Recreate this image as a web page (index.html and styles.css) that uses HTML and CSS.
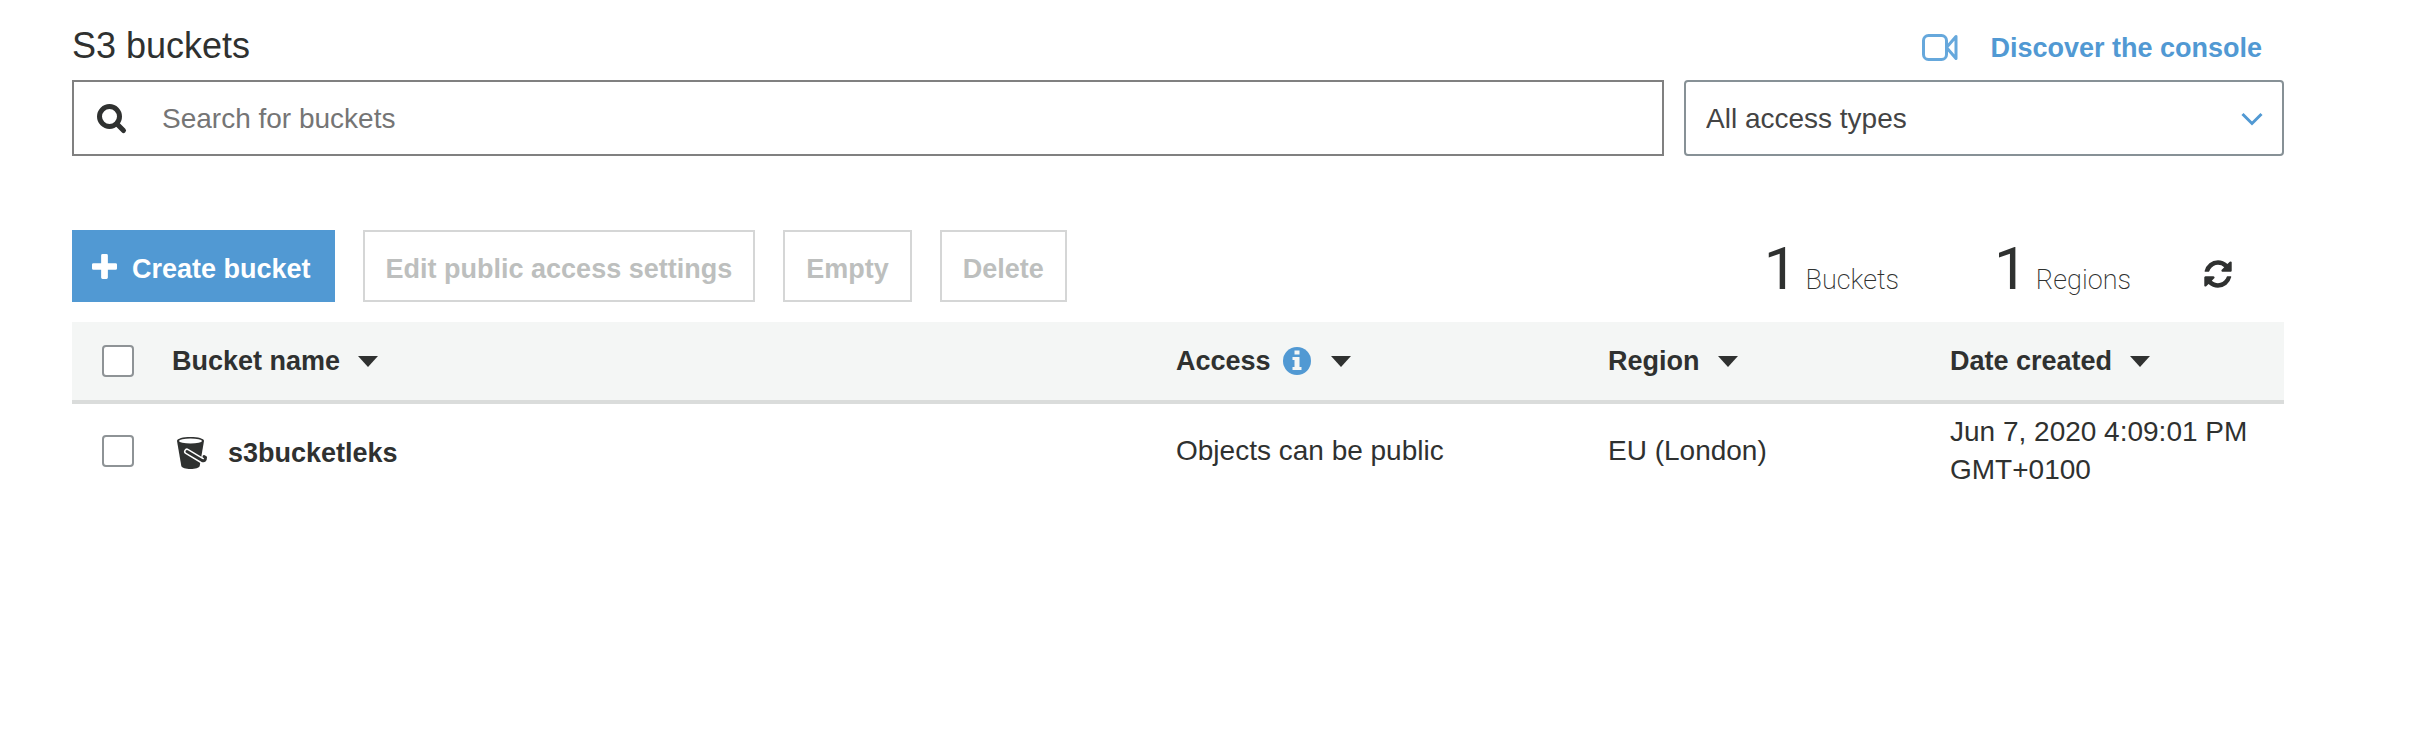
FILE: index.html
```html
<!DOCTYPE html>
<html lang="en">
<head>
<meta charset="utf-8">
<title>S3 buckets</title>
<link rel="stylesheet" href="styles.css">
</head>
<body>
<main class="page">
  <header class="heading">
    <h1 class="title">S3 buckets</h1>
    <a class="discover" href="#">
      <svg class="video-icon" viewBox="0 0 36 28" aria-hidden="true"><rect x="1.500" y="1.500" width="23" height="24" rx="5"/><path d="M24.500 13.500 34 2.500v22z"/></svg>
      Discover the console
    </a>
  </header>

  <div class="filters">
    <label class="search">
      <svg class="search-icon" viewBox="0 0 32 32" aria-hidden="true"><circle cx="13.500" cy="13.500" r="10"/><path d="M21 21l6.500 6.500"/></svg>
      <input class="search-input" type="search" placeholder="Search for buckets" aria-label="Search for buckets">
    </label>
    <div class="access-filter">
      <select class="access-select" aria-label="Access type">
        <option>All access types</option>
      </select>
      <svg class="chevron" viewBox="0 0 22 14" aria-hidden="true"><path d="M1.500 2l9.500 9.500L20.500 2"/></svg>
    </div>
  </div>

  <div class="toolbar">
    <button class="button primary" type="button">
      <svg class="plus-icon" viewBox="0 0 26 26" aria-hidden="true"><path d="M11 0h4q1.500 0 1.500 1.500v8h8q1.500 0 1.500 1.500v4q0 1.500-1.500 1.500h-8v8q0 1.500-1.500 1.500h-4q-1.500 0-1.500-1.500v-8h-8Q0 16.500 0 15v-4q0-1.500 1.500-1.500h8v-8Q9.500 0 11 0z"/></svg>
      <span>Create bucket</span>
    </button>
    <button class="button" type="button" disabled>Edit public access settings</button>
    <button class="button" type="button" disabled>Empty</button>
    <button class="button" type="button" disabled>Delete</button>
    <div class="stats">
      <p class="stat"><span class="count">1</span><span class="unit">Buckets</span></p>
      <p class="stat"><span class="count">1</span><span class="unit">Regions</span></p>
      <button class="refresh" type="button" aria-label="Refresh">
        <svg class="refresh-icon" viewBox="0 0 1792 1792" aria-hidden="true"><path d="M1639 1056q0 5-1 7-64 268-268 434.500t-478 166.500q-146 0-282.500-55t-243.500-157l-129 129q-19 19-45 19t-45-19-19-45v-448q0-26 19-45t45-19h448q26 0 45 19t19 45-19 45l-137 137q71 66 161 102t187 36q134 0 250-65t186-179q11-17 53-117 8-23 30-23h192q13 0 22.500 9.500t9.500 22.500zm25-800v448q0 26-19 45t-45 19h-448q-26 0-45-19t-19-45 19-45l138-138q-148-137-349-137-134 0-250 65t-186 179q-11 17-53 117-8 23-30 23h-199q-13 0-22.500-9.500t-9.500-22.500v-7q65-268 270-434.500t480-166.500q146 0 284 55.500t245 156.500l130-129q19-19 45-19t45 19 19 45z"/></svg>
      </button>
    </div>
  </div>

  <table class="buckets">
    <colgroup>
      <col class="col-check"><col class="col-name"><col class="col-access"><col class="col-region"><col class="col-date">
    </colgroup>
    <thead>
      <tr>
        <th class="check-cell"><input class="check" type="checkbox" aria-label="Select all buckets"></th>
        <th><span class="head">Bucket name <span class="caret"></span></span></th>
        <th><span class="head">Access
          <svg class="info-icon" viewBox="0 0 28 28" aria-hidden="true"><circle cx="14" cy="14" r="14"/><path d="M11.500 3.500h5v4h-5zM9.500 10h7v10h2v3h-9v-3h2v-7h-2z"/></svg>
          <span class="caret"></span></span></th>
        <th><span class="head">Region <span class="caret"></span></span></th>
        <th><span class="head">Date created <span class="caret"></span></span></th>
      </tr>
    </thead>
    <tbody>
      <tr>
        <td class="check-cell"><input class="check" type="checkbox" aria-label="Select s3bucketleks"></td>
        <td>
          <span class="bucket">
            <svg class="bucket-icon" viewBox="0 0 34 34" aria-hidden="true"><path class="pail" d="M1 5C1 2.500 7 1 14.500 1S28 2.500 28 5l-4.300 25c-.6 2-4.500 3-9.200 3s-8.600-1-9.200-3z"/><ellipse class="rim" cx="14.500" cy="5" rx="11.500" ry="2.600"/><path class="handle-edge" d="M11 15.500L26 24.500q3.500 1.300 3.500-3"/><path class="handle" d="M11 15.500L26 24.500q3.500 1.300 3.500-3l-1.500-1"/></svg>
            s3bucketleks
          </span>
        </td>
        <td>Objects can be public</td>
        <td>EU (London)</td>
        <td>Jun 7, 2020 4:09:01 PM GMT+0100</td>
      </tr>
    </tbody>
  </table>
</main>
</body>
</html>
```
FILE: styles.css
```css
* {
  box-sizing: border-box;
}

body {
  margin: 0;
  background: #fff;
  color: #2f3130;
  font: 28px/38px "Liberation Sans", Arial, sans-serif;
}

button,
input,
select {
  margin: 0;
  font: inherit;
  color: inherit;
}

.page {
  padding: 24px 130px 24px 72px;
}

.heading {
  display: flex;
  align-items: center;
  justify-content: space-between;
  margin-bottom: 12px;
}

.title {
  margin: 0;
  font-size: 36px;
  font-weight: 400;
  line-height: 44px;
}

.discover {
  display: flex;
  align-items: center;
  gap: 32px;
  padding: 4px 22px 0 0;
  color: #5199d3;
  font-size: 27px;
  font-weight: 700;
  text-decoration: none;
}

.video-icon {
  width: 36px;
  height: 28px;
  fill: none;
  stroke: #66a8dc;
  stroke-width: 3;
  stroke-linejoin: round;
}

.filters {
  display: flex;
  gap: 20px;
  margin-bottom: 74px;
}

.search {
  display: flex;
  flex: 1;
  align-items: center;
  gap: 34px;
  height: 76px;
  padding: 2px 22px 0;
  border: 2px solid #808080;
}

.search-icon {
  width: 32px;
  height: 32px;
  fill: none;
  stroke: #2f3130;
  stroke-width: 5;
  stroke-linecap: round;
}

.search-input {
  flex: 1;
  min-width: 0;
  padding: 0;
  border: 0;
  outline: 0;
  background: none;
  appearance: none;
}

.search-input::placeholder {
  color: #757575;
}

.access-filter {
  position: relative;
  flex: 0 1 600px;
}

.access-select {
  width: 100%;
  height: 76px;
  padding: 2px 60px 0 20px;
  border: 2px solid #879196;
  border-radius: 4px;
  background: #fff;
  color: #444;
  appearance: none;
}

.chevron {
  position: absolute;
  top: 32px;
  right: 21px;
  width: 22px;
  height: 14px;
  fill: none;
  stroke: #5199d3;
  stroke-width: 3;
  pointer-events: none;
}

.toolbar {
  display: flex;
  gap: 28px;
  margin-bottom: 20px;
}

.button {
  display: flex;
  align-items: center;
  gap: 15px;
  height: 72px;
  padding: 6px 21px 0;
  border: 2px solid #d5d6d6;
  background: #fff;
  color: #bdbfbe;
  font-size: 27px;
  font-weight: 700;
  white-space: nowrap;
}

.primary {
  padding: 6px 22px 0 18px;
  border-color: #5199d3;
  background: #5199d3;
  color: #fff;
}

.plus-icon {
  width: 25px;
  height: 25px;
  margin-bottom: 5px;
  fill: #fff;
}

.stats {
  display: flex;
  align-items: flex-end;
  margin-left: auto;
  padding: 0 50px 3px 0;
}

.stat {
  display: flex;
  align-items: baseline;
  gap: 8px;
  margin: 0 71px 0 24px;
  font-family: Roboto, "Liberation Sans", sans-serif;
}

.count {
  font-size: 60px;
  line-height: 60px;
}

.unit {
  font-size: 27px;
  font-weight: 200;
}

.refresh {
  display: flex;
  padding: 0 0 9px;
  border: 0;
  background: none;
}

.refresh-icon {
  width: 32px;
  height: 32px;
  fill: #2f3130;
}

.buckets {
  width: 100%;
  border-collapse: collapse;
  table-layout: fixed;
}

.col-check {
  width: 100px;
}

.col-name {
  width: 1004px;
}

.col-access {
  width: 432px;
}

.col-region {
  width: 342px;
}

.col-date {
  width: 334px;
}

.buckets th {
  height: 80px;
  padding: 0;
  border-bottom: 4px solid #dadcdb;
  background: #f4f6f5;
  font-size: 27px;
  font-weight: 700;
  text-align: left;
}

.buckets td {
  padding: 9px 0;
}

.buckets .check-cell {
  padding-left: 30px;
}

.check {
  display: block;
  width: 32px;
  height: 32px;
  border: 2px solid #8e9396;
  border-radius: 4px;
  background: #fff;
  appearance: none;
}

.head {
  display: flex;
  align-items: center;
}

.caret {
  margin-left: 18px;
  border: 10px solid transparent;
  border-top: 11px solid #2f3130;
  border-bottom: 0;
}

.info-icon {
  width: 28px;
  height: 28px;
  margin-left: 12px;
  fill: #5199d3;
}

.info-icon path {
  fill: #f4f6f5;
}

.info-icon + .caret {
  margin-left: 20px;
}

.bucket {
  display: flex;
  align-items: center;
  gap: 18px;
  padding: 3px 0 0 4px;
  font-size: 27px;
  font-weight: 700;
}

.bucket-icon {
  width: 34px;
  height: 34px;
}

.pail {
  fill: #2f3130;
}

.rim {
  fill: #fff;
}

.handle-edge,
.handle {
  fill: none;
  stroke-linecap: round;
}

.handle-edge {
  stroke: #fff;
  stroke-width: 6;
}

.handle {
  stroke: #2f3130;
  stroke-width: 3;
}
```
